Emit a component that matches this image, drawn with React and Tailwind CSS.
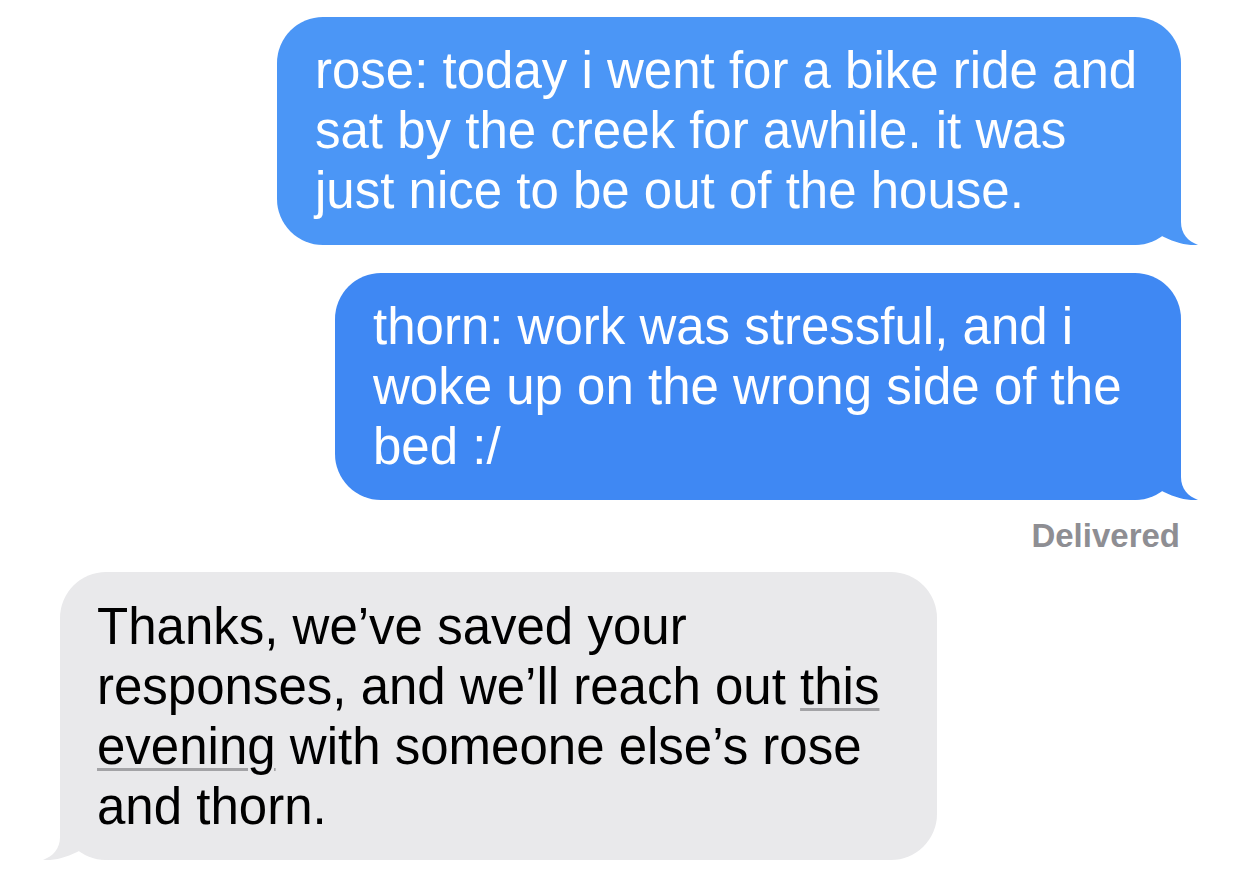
import React from 'react'

const font = { fontFamily: '"Liberation Sans", Arial, sans-serif' }

function TailRight({ color }) {
  return (
    <svg className="absolute bottom-0 right-[-17px]" width="80" height="65" viewBox="0 0 80 65">
      <path d="M0 0 L63 0 L63 42 C63 54 70 61 80 65 C69 66 55 62 42 55 C34 62 24 65 10 65 L0 65 Z" fill={color} />
    </svg>
  )
}

function TailLeft({ color }) {
  return (
    <svg className="absolute bottom-0 left-[-17px]" width="80" height="65" viewBox="0 0 80 65">
      <path d="M80 0 L17 0 L17 42 C17 54 10 61 0 65 C11 66 25 62 38 55 C46 62 56 65 70 65 L80 65 Z" fill={color} />
    </svg>
  )
}

export default function App() {
  return (
    <div className="w-[1242px] h-[883px] bg-white overflow-hidden relative" style={font}>
      <div className="flex flex-col pt-[17px]">
        {/* rose */}
        <div className="self-end mr-[61px] relative w-[904px] h-[228px] rounded-[46px] bg-[#4b96f6] pl-[38px] pt-[24px]">
          <TailRight color="#4b96f6" />
          <p className="relative text-white text-[51px] leading-[60px]">
            rose: today i went for a bike ride and<br />
            sat by the creek for awhile. it was<br />
            just nice to be out of the house.
          </p>
        </div>

        {/* thorn */}
        <div className="self-end mr-[61px] mt-[28px] relative w-[846px] h-[227px] rounded-[46px] bg-[#3f88f3] pl-[38px] pt-[24px]">
          <TailRight color="#3f88f3" />
          <p className="relative text-white text-[51px] leading-[60px]">
            thorn: work was stressful, and i<br />
            woke up on the wrong side of the<br />
            bed :/
          </p>
        </div>

        <div className="self-end mr-[62px] mt-[18px] text-[33px] leading-[36px] font-bold text-[#8e8e93]">
          Delivered
        </div>

        {/* reply */}
        <div className="self-start ml-[60px] mt-[18px] relative w-[877px] h-[288px] rounded-[46px] bg-[#e9e9eb] pl-[37px] pt-[25px]">
          <TailLeft color="#e9e9eb" />
          <p className="relative text-black text-[51px] leading-[60px]">
            Thanks, we’ve saved your<br />
            responses, and we’ll reach out{' '}
            <span className="underline decoration-[#a3a3a6] decoration-[3px] underline-offset-[4px]">this</span><br />
            <span className="underline decoration-[#a3a3a6] decoration-[3px] underline-offset-[4px]">evening</span>{' '}
            with someone else’s rose<br />
            and thorn.
          </p>
        </div>
      </div>
    </div>
  )
}
